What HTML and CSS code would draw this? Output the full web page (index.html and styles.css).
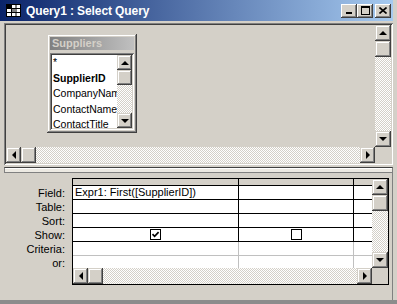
FILE: index.html
```html
<!DOCTYPE html>
<html lang="en">
<head>
    <meta charset="UTF-8">
    <title>Query1 : Select Query</title>
    <link rel="stylesheet" href="styles.css">
</head>
<body>
<div class="window">
    <div class="titlebar">
        <svg class="app-icon" width="15" height="13" viewBox="0 0 15 13">
            <rect x="0.5" y="0.5" width="14" height="12" fill="#fff" stroke="#000"/>
            <rect x="1" y="1" width="4" height="3" fill="#000"/>
            <path d="M5.5 1v11M10 1v11M1 4.5h13M1 8.5h13" stroke="#000" stroke-width="1"/>
            <rect x="6" y="5" width="3.5" height="3" fill="#808080"/>
        </svg>
        <span class="title">Query1 : Select Query</span>
        <div class="caption-btns">
            <div class="cbtn"><svg width="8" height="7" viewBox="0 0 8 7"><rect x="1" y="5" width="6" height="2" fill="#000"/></svg></div>
            <div class="cbtn"><svg width="9" height="9" viewBox="0 0 9 9"><rect x="0.5" y="0.5" width="8" height="8" fill="none" stroke="#000"/><rect x="0" y="0" width="9" height="2" fill="#000"/></svg></div>
            <div class="cbtn close"><svg width="8" height="7" viewBox="0 0 8 7"><path d="M0.5 0.5L7.5 6.5M7.5 0.5L0.5 6.5" stroke="#000" stroke-width="1.6"/></svg></div>
        </div>
    </div>

    <div class="design-pane">
        <div class="canvas">
            <div class="field-list">
                <div class="fl-title">Suppliers</div>
                <div class="fl-box">
                    <ul class="fl-items">
                        <li>*</li>
                        <li class="key">SupplierID</li>
                        <li>CompanyName</li>
                        <li>ContactName</li>
                        <li>ContactTitle</li>
                    </ul>
                    <div class="vscroll small">
                        <div class="sbtn"><i class="arr up"></i></div>
                        <div class="sbtn"></div>
                        <div class="track"></div>
                        <div class="sbtn"><i class="arr down"></i></div>
                    </div>
                </div>
            </div>
        </div>
        <div class="vscroll">
            <div class="sbtn"><i class="arr up"></i></div>
            <div class="sbtn"></div>
            <div class="track"></div>
            <div class="sbtn"><i class="arr down"></i></div>
        </div>
        <div class="hscroll">
            <div class="sbtn"><i class="arr left"></i></div>
            <div class="sbtn"></div>
            <div class="track"></div>
            <div class="sbtn"><i class="arr right"></i></div>
        </div>
        <div class="corner"></div>
    </div>

    <div class="splitter"></div>

    <div class="grid-pane">
        <div class="row-labels">
            <div class="lbl-head"></div>
            <div>Field:</div>
            <div>Table:</div>
            <div>Sort:</div>
            <div>Show:</div>
            <div>Criteria:</div>
            <div>or:</div>
        </div>
        <div class="qbe">
            <div class="qbe-rows">
                <div class="qrow head"><div class="c1"></div><div class="c2"></div><div class="c3"></div></div>
                <div class="qrow"><div class="c1 text">Expr1: First([SupplierID])</div><div class="c2"></div><div class="c3"></div></div>
                <div class="qrow"><div class="c1"></div><div class="c2"></div><div class="c3"></div></div>
                <div class="qrow"><div class="c1"></div><div class="c2"></div><div class="c3"></div></div>
                <div class="qrow">
                    <div class="c1"><span class="check"><svg width="9" height="9" viewBox="0 0 9 9"><path d="M1.5 4.2L3.6 6.3L7.6 2.2" fill="none" stroke="#000" stroke-width="1.7"/></svg></span></div>
                    <div class="c2"><span class="check"></span></div>
                    <div class="c3"></div>
                </div>
                <div class="qrow light"><div class="c1"></div><div class="c2"></div><div class="c3"></div></div>
                <div class="qrow light last"><div class="c1"></div><div class="c2"></div><div class="c3"></div></div>
            </div>
            <div class="vscroll">
                <div class="sbtn"><i class="arr up"></i></div>
                <div class="sbtn"></div>
                <div class="track"></div>
                <div class="sbtn"><i class="arr down"></i></div>
            </div>
            <div class="hscroll">
                <div class="sbtn"><i class="arr left"></i></div>
                <div class="sbtn"></div>
                <div class="track"></div>
                <div class="sbtn"><i class="arr right"></i></div>
            </div>
            <div class="corner"></div>
        </div>
    </div>
</div>
</body>
</html>
```

FILE: styles.css
```css
*{
    box-sizing: border-box;
}
body{
    margin: 0;
    background: #d4d0c8;
    font-family: "Liberation Sans", Arial, sans-serif;
    font-size: 11px;
    color: #000;
}
.window{
    width: 397px;
    height: 304px;
    background: #d4d0c8;
    border-bottom: 4px solid #8c8c8c;
    overflow: hidden;
}

/* title bar */
.titlebar{
    width: 393px;
    height: 21px;
    display: flex;
    align-items: center;
    padding-left: 6px;
    background: linear-gradient(to right, #0a246a, #a6caf0);
}
.app-icon{
    margin-right: 5px;
}
.title{
    flex: 1;
    color: #fff;
    font-weight: bold;
    font-size: 12px;
    letter-spacing: -0.1px;
}
.caption-btns{
    display: flex;
    margin-right: 2px;
}
.cbtn{
    width: 16px;
    height: 14px;
    display: flex;
    align-items: center;
    justify-content: center;
    background: #d4d0c8;
    box-shadow: inset -1px -1px #404040, inset 1px 1px #fff, inset -2px -2px #808080;
}
.cbtn.close{
    margin-left: 2px;
}

/* shared scrollbar bits */
.vscroll, .hscroll{
    display: flex;
    background: repeating-conic-gradient(#d4d0c8 0 25%, #fff 0 50%) 0 0 / 2px 2px;
}
.vscroll{
    flex-direction: column;
}
.track{
    flex: 1;
}
.sbtn{
    width: 16px;
    height: 16px;
    flex: none;
    display: flex;
    align-items: center;
    justify-content: center;
    background: #d4d0c8;
    box-shadow: inset -1px -1px #404040, inset 1px 1px #d4d0c8, inset -2px -2px #808080, inset 2px 2px #fff;
}
.hscroll .sbtn{
    width: 15px;
}
.arr{
    width: 0;
    height: 0;
    border: 4px solid transparent;
}
.arr.up{
    border-top: 0;
    border-bottom: 4px solid #000;
}
.arr.down{
    border-bottom: 0;
    border-top: 4px solid #000;
}
.arr.left{
    border-left: 0;
    border-right: 4px solid #000;
}
.arr.right{
    border-right: 0;
    border-left: 4px solid #000;
}
.corner{
    background: #d4d0c8;
}

/* top design pane */
.design-pane{
    width: 389px;
    height: 142px;
    margin: 2px 0 0 4px;
    padding: 2px;
    display: grid;
    grid-template-columns: 1fr 16px;
    grid-template-rows: 1fr 16px;
    box-shadow: inset 1px 1px #808080, inset -1px -1px #fff, inset 2px 2px #404040, inset -2px -2px #d4d0c8;
}
.canvas{
    overflow: hidden;
    padding: 9px 0 0 41px;
}
.field-list{
    width: 90px;
    height: 99px;
    padding: 3px;
    background: #d4d0c8;
    box-shadow: inset -1px -1px #404040, inset 1px 1px #d4d0c8, inset -2px -2px #808080, inset 2px 2px #fff;
}
.fl-title{
    height: 13px;
    line-height: 13px;
    padding-left: 2px;
    font-weight: bold;
    font-size: 11px;
    color: #d4d0c8;
    background: linear-gradient(to right, #808080, #c0c0c0);
}
.fl-box{
    margin-top: 3px;
    height: 77px;
    padding: 2px;
    display: flex;
    background: #fff;
    box-shadow: inset 1px 1px #808080, inset -1px -1px #fff, inset 2px 2px #404040, inset -2px -2px #d4d0c8;
}
.fl-items{
    flex: 1;
    list-style: none;
    margin: 0;
    padding: 0 0 0 1px;
    overflow: hidden;
    white-space: nowrap;
    line-height: 15.5px;
    font-size: 10.5px;
}
.fl-items .key{
    font-weight: bold;
}
.vscroll.small .sbtn{
    width: 15px;
    height: 15px;
}

/* splitter */
.splitter{
    width: 389px;
    height: 6px;
    margin: 2px 0 0 4px;
    border: 1px solid #808080;
    border-top-color: #404040;
    background: #ece9e2;
    box-shadow: inset 0 1px #fff;
}

/* QBE grid */
.grid-pane{
    width: 389px;
    height: 127px;
    margin-left: 4px;
    padding-top: 5px;
    display: flex;
    align-items: flex-start;
    border-right: 1px solid #808080;
}
.row-labels{
    width: 68px;
    padding-right: 7px;
    text-align: right;
    line-height: 14px;
}
.lbl-head{
    height: 8px;
}
.qbe{
    width: 317px;
    height: 107px;
    border: 1px solid #000;
    display: grid;
    grid-template-columns: 1fr 16px;
    grid-template-rows: 1fr 16px;
    background: #fff;
}
.qrow{
    display: flex;
    height: 14px;
    border-bottom: 1px solid #000;
}
.qrow.head{
    height: 7px;
    background: #d4d0c8;
}
.qrow.light{
    border-bottom-color: #c0c0c0;
}
.qrow.last{
    height: 12px;
    border-bottom: 0;
}
.c1, .c2{
    border-right: 1px solid #000;
    display: flex;
    align-items: center;
    justify-content: center;
}
.light .c1, .light .c2{
    border-right-color: #c0c0c0;
}
.c1{
    width: 166px;
}
.c2{
    width: 115px;
}
.c3{
    flex: 1;
}
.c1.text{
    justify-content: flex-start;
    padding-left: 2px;
    line-height: 13px;
    white-space: nowrap;
}
.check{
    width: 11px;
    height: 11px;
    border: 1px solid #000;
    background: #fff;
    display: flex;
    align-items: center;
    justify-content: center;
}
```
